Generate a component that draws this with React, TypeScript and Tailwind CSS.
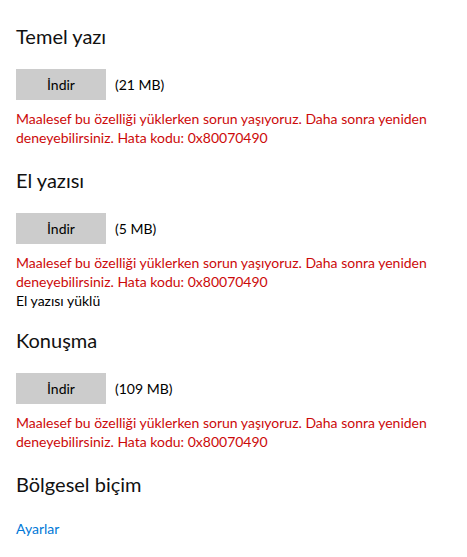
import React from 'react'

const font = { fontFamily: 'Lato, "Noto Sans", sans-serif' }

function ErrorText() {
  return (
    <p className="mt-[9px] text-[14px] leading-[19px] text-[#cc0a0a] pr-4">
      Maalesef bu özelliği yüklerken sorun yaşıyoruz. Daha sonra yeniden deneyebilirsiniz. Hata kodu: 0x80070490
    </p>
  )
}

function Feature({ title, size, extra }: { title: string; size: string; extra?: string }) {
  return (
    <section className={extra ? 'mb-[16px]' : 'mb-[19px]'}>
      <h2 className="text-[20px] leading-[28px] text-[#111111]">{title}</h2>
      <div className="mt-[19px] flex items-center gap-[9px]">
        <button className="w-[90px] h-[31px] bg-[#cccccc] text-[14px] text-black">İndir</button>
        <span className="text-[14px] text-black">{size}</span>
      </div>
      <ErrorText />
      {extra && <p className="text-[14px] leading-[19px] text-black">{extra}</p>}
    </section>
  )
}

export default function App() {
  return (
    <div className="w-[467px] h-[557px] bg-white px-4 pt-[22px]" style={font}>
      <Feature title="Temel yazı" size="(21 MB)" />
      <Feature title="El yazısı" size="(5 MB)" extra="El yazısı yüklü" />
      <Feature title="Konuşma" size="(109 MB)" />
      <h2 className="text-[20px] leading-[28px] text-[#111111]">Bölgesel biçim</h2>
      <a className="mt-[20px] block text-[14px] text-[#0078d7]">Ayarlar</a>
    </div>
  )
}
